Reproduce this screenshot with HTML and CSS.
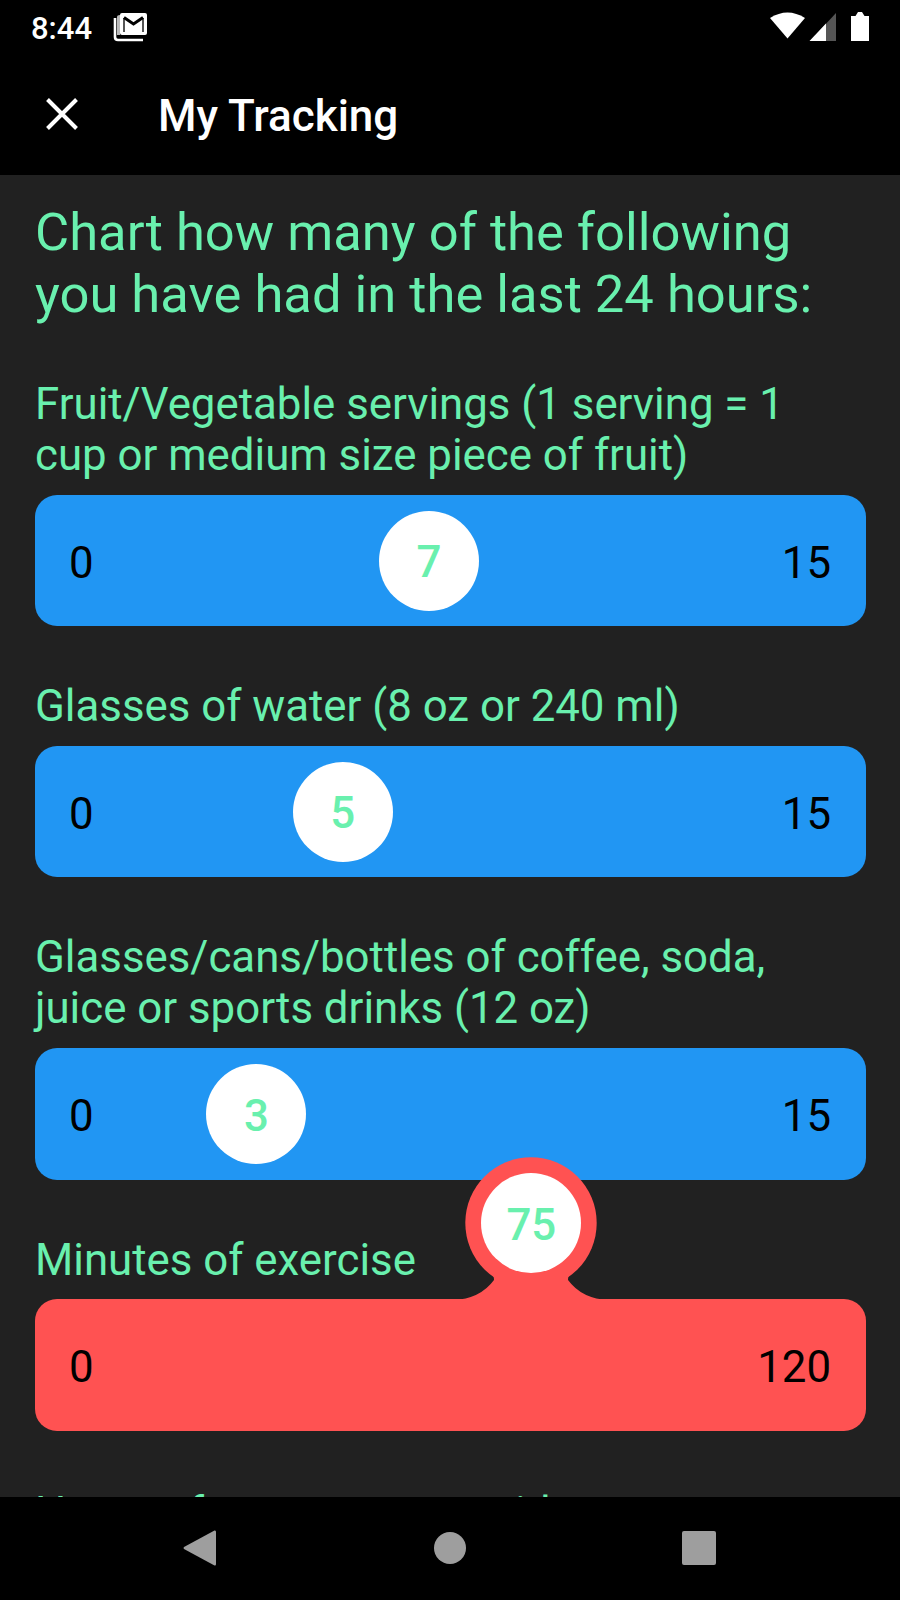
FILE: index.html
```html
<!DOCTYPE html>
<html lang="en">
   <head>
      <meta charset="utf-8">
      <meta name="viewport" content="width=device-width, initial-scale=1">
      <title>My Tracking</title>
      <link rel="stylesheet" href="styles.css">
   </head>
   <body>
      <div class="status-bar">
         <span class="clock">8:44</span>
         <svg class="mail" width="36" height="30" viewBox="0 0 36 30">
            <path d="M2 5v19q0 3 3 3h25" fill="none" stroke="#fff" stroke-width="2.6"/>
            <path d="M4 4v18h3V2q-3 0-3 2z" fill="#bbb"/>
            <path d="M9 0h23q2 0 2 2v18q0 2-2 2H9q-2 0-2-2V2q0-2 2-2z" fill="#fff"/>
            <path d="M11 19V5M30 5v14" stroke="#555" stroke-width="2"/>
            <path d="M11 4.500l9.500 6.500L30 4.500" fill="none" stroke="#000" stroke-width="3"/>
         </svg>
         <svg class="signals" width="102" height="32" viewBox="0 0 102 32">
            <path d="M0 7Q17.500-4 35 7L17.500 27.500z" fill="#fff"/>
            <path d="M66 2v28H40z" fill="#555"/>
            <path d="M56 12.500V30H39.500z" fill="#fff"/>
            <path d="M81 5h4.500L88 1h4l2.500 4H99v25H81z" fill="#fff"/>
         </svg>
      </div>
      <header class="app-bar">
         <svg class="close" width="32" height="32" viewBox="0 0 32 32">
            <path d="M1.500 1.500l29 29M30.500 1.500l-29 29" stroke="#fff" stroke-width="4"/>
         </svg>
         <h1 class="title">My Tracking</h1>
      </header>
      <main class="content">
         <h2 class="intro">Chart how many of the following<br>you have had in the last 24 hours:</h2>
         <section class="question">
            <p class="label">Fruit/Vegetable servings (1 serving = 1<br>cup or medium size piece of fruit)</p>
            <div class="slider">
               <span>0</span><span>15</span>
               <div class="knob" style="--value: 0.4667">7</div>
            </div>
         </section>
         <section class="question">
            <p class="label">Glasses of water (8 oz or 240 ml)</p>
            <div class="slider">
               <span>0</span><span>15</span>
               <div class="knob" style="--value: 0.3333">5</div>
            </div>
         </section>
         <section class="question">
            <p class="label">Glasses/cans/bottles of coffee, soda,<br>juice or sports drinks (12 oz)</p>
            <div class="slider">
               <span>0</span><span>15</span>
               <div class="knob" style="--value: 0.2">3</div>
            </div>
         </section>
         <section class="question">
            <p class="label">Minutes of exercise</p>
            <div class="slider active">
               <span>0</span><span>120</span>
               <div class="knob" style="--value: 0.625">
                  <svg class="bubble" width="156" height="146" viewBox="0 0 156 146">
                     <circle cx="78" cy="66" r="65.700" fill="#ff5252"/>
                     <path d="M40 117q1 4 1 6Q27 142 0 143v3h156v-3q-27-1-41-20q0-2 1-6z" fill="#ff5252"/>
                     <circle cx="78" cy="66" r="50" fill="#fff"/>
                  </svg>
                  <span class="number">75</span>
               </div>
            </div>
         </section>
         <section class="question">
            <p class="label">Hours of computer use video</p>
         </section>
      </main>
      <nav class="nav-bar">
         <svg width="34" height="38" viewBox="0 0 34 38"><path d="M31.500 1.500Q33 1 33 3v32q0 2-1.500 1.500L1 20q-1-1 0-2z" fill="#9e9e9e"/></svg>
         <svg width="32" height="32" viewBox="0 0 32 32"><circle cx="16" cy="16" r="16" fill="#9e9e9e"/></svg>
         <svg width="34" height="34" viewBox="0 0 34 34"><rect width="34" height="34" rx="2" fill="#9e9e9e"/></svg>
      </nav>
   </body>
</html>
```
FILE: styles.css
```css
body {
   display: flex;
   flex-direction: column;
   height: 1600px;
   margin: 0;
   overflow: hidden;
   background-color: #212121;
   color: #69f0ae;
   font-family: Roboto, sans-serif;
}
.status-bar {
   display: flex;
   flex: none;
   align-items: flex-start;
   box-sizing: border-box;
   height: 52px;
   padding: 10px 28px 0 31px;
   background-color: black;
   color: white;
}
.clock {
   width: 82px;
   font-size: 31px;
   font-weight: 500;
   line-height: 37px;
}
.mail {
   margin-top: 3px;
}
.signals {
   margin: 1px 0 0 auto;
}
.app-bar {
   display: flex;
   flex: none;
   align-items: center;
   gap: 80px;
   height: 123px;
   padding-left: 46px;
   background-color: black;
   color: white;
}
.close {
   margin-top: 1px;
}
.title {
   margin: 5px 0 0;
   font-size: 44px;
   font-weight: 500;
   line-height: 52px;
}
.content {
   flex: 1;
   min-height: 0;
   padding: 27px 34px 0 35px;
   overflow: hidden;
}
.intro {
   margin: 0;
   font-size: 52.5px;
   font-weight: 400;
   line-height: 61.6px;
}
.question {
   margin-top: 55px;
}
.intro + .question {
   margin-top: 53.5px;
}
.question:last-child {
   margin-top: 57px;
}
.label {
   margin: 0;
   font-size: 43.8px;
   line-height: 51.3px;
   white-space: nowrap;
}
.slider {
   position: relative;
   display: flex;
   align-items: center;
   justify-content: space-between;
   box-sizing: border-box;
   height: 131.5px;
   margin-top: 13.3px;
   padding: 5px 35px 0 34px;
   border-radius: 22px;
   background-color: #2196f3;
   color: black;
   font-size: 43.8px;
}
.active {
   background-color: #ff5252;
}
.knob {
   position: absolute;
   top: 16px;
   left: calc(42px + var(--value) * 647px);
   display: flex;
   align-items: center;
   justify-content: center;
   box-sizing: border-box;
   width: 100px;
   height: 100px;
   padding-top: 3px;
   border-radius: 50%;
   background-color: white;
   color: #69f0ae;
   font-weight: 500;
}
.active .knob {
   top: -126px;
   background: none;
}
.bubble {
   position: absolute;
   top: -16px;
   left: -28px;
}
.number {
   position: relative;
}
.nav-bar {
   display: flex;
   flex: none;
   align-items: center;
   justify-content: space-between;
   box-sizing: border-box;
   height: 103px;
   padding: 0 184px 1px 183px;
   background-color: black;
}
```
